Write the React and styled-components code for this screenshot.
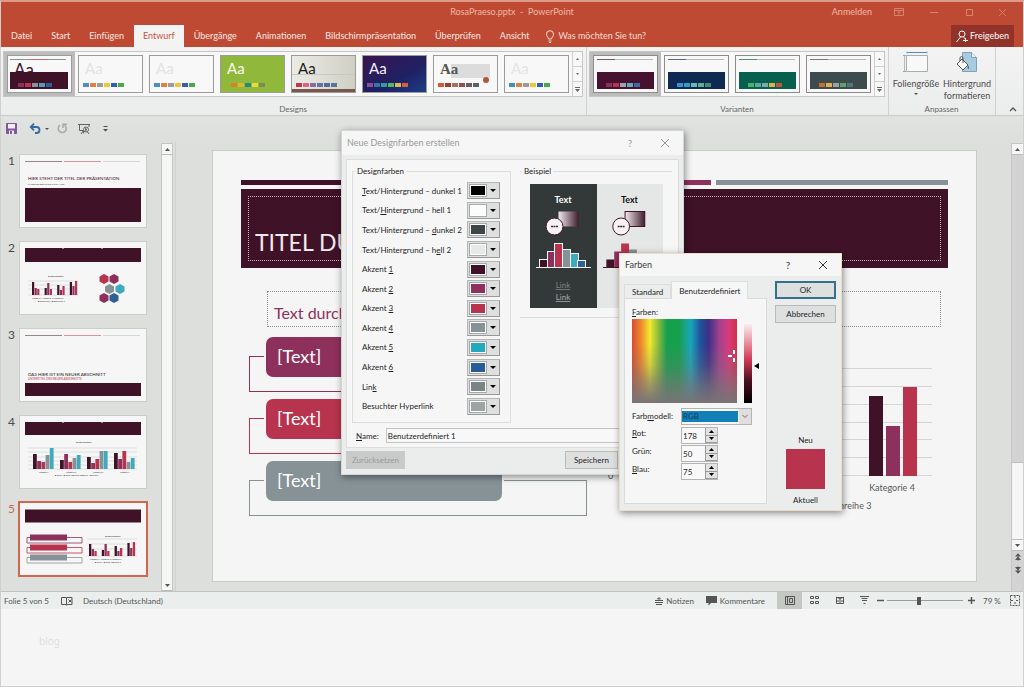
import React from 'react'
import styled, { createGlobalStyle } from 'styled-components'

const wine = '#3f1227'
const purple = '#8e305c'
const red = '#b8334d'
const slate = '#869296'
const teal = '#3fa9bd'
const blue = '#2f5f93'

const GlobalStyle = createGlobalStyle`
*{ box-sizing:border-box; }
body{
margin:0;
background:#f5f5f5;
color:#3c3c3c;
font-family:Lato, "Noto Sans", sans-serif;
font-size:9px;
line-height:12px;
}
button, input, select{
font:inherit;
color:inherit;
margin:0;
padding:0;
border:none;
border-radius:0;
background:none;
}
svg{ display:block; flex-shrink:0; }
`

/* ---------- window ---------- */

const Window = styled.div`
position:relative;
min-height:100vh;
border:1px solid #cfcfcf;
border-top:2px solid #dd9a86;
background:#f5f5f5;
overflow:hidden;
`
const TitleBar = styled.header`
display:grid;
grid-template-columns:1fr auto 1fr;
align-items:center;
height:23px;
padding-bottom:3px;
background:#bf4a33;
color:#f0b8a4;
`
const DocTitle = styled.h1`
grid-column:2;
margin:0;
font-size:9px;
font-weight:400;
`
const TitleTools = styled.div`
display:flex;
align-items:center;
justify-content:flex-end;
padding-right:12px;
`
const SignIn = styled.a`
color:#f0b8a4;
text-decoration:none;
margin-right:22px;
`
const WindowButtons = styled.div`
display:flex;
gap:23px;
color:#d9826c;
button{ width:12px; height:12px; }
`
const TabBar = styled.nav`
display:flex;
gap:1px;
height:22px;
padding:0 9px 0 1px;
background:#bf4a33;
`
const RibbonTab = styled.button`
padding:0 9px;
background:${p => (p.$active ? '#f3f3f3' : 'transparent')};
color:${p => (p.$active ? '#c8553a' : '#fbe9e3')};
`
const TellMe = styled.label`
display:flex;
align-items:center;
gap:3px;
padding-left:6px;
color:#f9dcd2;
input{ width:120px; }
input::placeholder{ color:#f9dcd2; opacity:1; }
`
const ShareButton = styled.button`
display:flex;
align-items:center;
gap:2px;
margin-left:auto;
padding:0 5px;
background:#91332a;
color:#fff;
`

/* ---------- ribbon ---------- */

const Ribbon = styled.section`
display:flex;
height:69px;
background:linear-gradient(#f3f3f3, #ebecec);
border-bottom:1px solid #c9cbc9;
`
const Group = styled.div`
display:flex;
flex-direction:column;
align-items:center;
justify-content:space-between;
padding:4px 3px 0 2px;
border-right:1px solid #d0d2d1;
`
const GroupName = styled.div`
height:12px;
color:#666;
font-size:8px;
`
const Gallery = styled.div`
display:flex;
height:46px;
background:#f8f8f8;
border:1px solid #c6c6c6;
`
const GalleryItem = styled.button`
width:71px;
padding:2px 3px;
background:${p => (p.$active ? '#bcbcbc' : 'transparent')};
`
const GalleryScroll = styled.div`
display:flex;
flex-direction:column;
width:10px;
border-left:1px solid #cfcfcf;
button{
flex:1;
display:flex;
align-items:center;
justify-content:center;
border-bottom:1px solid #cfcfcf;
color:#666;
}
button:last-child{ border-bottom:none; }
`
const BigButtons = styled.div`
display:flex;
gap:1px;
`
const BigButton = styled.button`
display:flex;
flex-direction:column;
align-items:center;
width:50px;
height:50px;
color:#4c4c4c;
svg:first-child{ margin-bottom:3px; }
svg:last-child{ margin-top:3px; }
span{ display:block; }
`
const CollapseButton = styled.button`
align-self:flex-end;
margin-left:auto;
padding:3px 6px;
color:#555;
`

/* ---------- workspace ---------- */

const QuickAccess = styled.div`
display:flex;
align-items:center;
height:25px;
padding-left:5px;
background:linear-gradient(#e1e3e1, #dcdfdb);
color:#4c4c4c;
button{ display:flex; align-items:center; height:16px; }
`
const QuickButton = styled.button`
margin-right:${p => p.$gap || 0}px;
`
const Workspace = styled.main`
display:flex;
padding-top:1px;
background:#dcdfdb;
border-bottom:1px solid #c0c3c1;
`
const SlideList = styled.ol`
list-style:none;
margin:0;
padding:13px 14px 0 6px;
width:160px;
`
const SlideItem = styled.li`
display:flex;
height:87px;
color:${p => (p.$active ? '#cf6650' : '#4b4b4b')};
font-size:12px;
span{ width:13px; padding-left:1px; }
svg{
background:#f6f6f6;
outline:${p => (p.$active ? '2px solid #cf6650' : '1px solid #cbcdcb')};
}
`
const ScrollBar = styled.div`
display:flex;
flex-direction:column;
width:12px;
margin-top:1px;
padding-bottom:${p => (p.$gray ? 14 : 0)}px;
background:${p => (p.$gray ? '#d2d3d2' : '#f6f6f6')};
border:1px solid #c4c6c4;
border-width:1px ${p => (p.$gray ? 0 : 1)}px 0 1px;
`
const ScrollButton = styled.button`
display:flex;
align-items:center;
justify-content:center;
height:${p => (p.$flat ? 13 : 11)}px;
background:${p => (p.$flat ? 'transparent' : '#f6f6f6')};
border-bottom:1px solid ${p => (p.$flat ? 'transparent' : '#bcbebc')};
color:#555;
`
const ScrollTrack = styled.div`
flex:1;
display:flex;
align-items:flex-end;
`
const ScrollThumb = styled.div`
width:100%;
height:78px;
background:#f6f6f6;
border:1px solid #bcbebc;
border-width:1px 0;
`
const Stage = styled.div`
flex:1;
margin-left:2px;
padding:9px 35px 10px 37px;
border-left:1px solid #cfd2cf;
`
const Slide = styled.article`
aspect-ratio:763 / 430;
padding:29px 28px 0;
background:#f5f5f5;
outline:1px solid #c9ccc9;
`
const AccentBars = styled.div`
display:grid;
grid-template-columns:repeat(3, 1fr);
gap:5px;
height:5px;
margin-bottom:4px;
`
const AccentBar = styled.div`
background:${p => p.$color};
`
const TitleBand = styled.div`
height:79px;
padding:7px;
background:${wine};
`
const SlideTitle = styled.h2`
height:65px;
margin:0;
padding:31px 6px 0;
border:1px dotted #c9b4be;
color:#f3e9ee;
font-size:23px;
font-weight:400;
line-height:28px;
white-space:nowrap;
overflow:hidden;
`
const SlideColumns = styled.div`
display:grid;
grid-template-columns:1fr 1fr;
gap:16px;
padding:23px 7px 0 8px;
`
const Placeholder = styled.p`
height:36px;
margin:0 0 10px ${p => (p.$indent ? 18 : 0)}px;
padding:8px 6px;
border:1px dotted #8f8f8f;
color:${purple};
font-size:16px;
line-height:26px;
white-space:nowrap;
`
const SmartArt = styled.div`
display:grid;
gap:7px;
`
const SmartItem = styled.div`
display:grid;
grid-template-columns:17px 236px 1fr;
height:55px;
&::before{
content:"";
grid-area:1 / 1 / 2 / 4;
margin-top:19px;
border:1px solid ${p => p.$color};
}
`
const SmartLabel = styled.div`
grid-area:1 / 2;
height:40px;
padding:0 11px;
border-radius:7px;
background:${p => p.$color};
box-shadow:0 0 0 2px #f5f5f5;
color:#fff;
font-size:18px;
line-height:38px;
`

/* ---------- status bar ---------- */

const StatusBar = styled.footer`
display:flex;
align-items:center;
height:17px;
padding:0 3px;
background:#eaeeed;
color:#555;
font-size:8px;
button{ display:flex; align-items:center; gap:3px; height:17px; }
`
const StatusSpell = styled.button`
margin:0 10px 0 12px;
`
const StatusRight = styled.div`
display:flex;
align-items:center;
margin-left:auto;
`
const StatusButton = styled.button`
margin-right:12px;
`
const ViewButton = styled.button`
width:25px;
justify-content:center;
background:${p => (p.$active ? '#c3c8c5' : 'transparent')};
`
const ZoomSlider = styled.input`
appearance:none;
width:76px;
height:12px;
margin:0 5px 0 3px;
background:linear-gradient(#9a9d9b, #9a9d9b) center / 100% 1px no-repeat;
&::-webkit-slider-thumb{
appearance:none;
width:4px;
height:8px;
background:#555;
}
`
const ZoomValue = styled.span`
width:24px;
margin:0 3px 0 8px;
`
const Watermark = styled.p`
margin:25px 38px;
color:#dfdfdf;
font-family:"Noto Sans", sans-serif;
font-size:10px;
line-height:14px;
`

/* ---------- dialogs ---------- */

const Dialog = styled.section`
position:absolute;
left:${p => p.$left}px;
top:${p => p.$top}px;
width:${p => p.$width}px;
background:#ebecec;
border:${p => p.$border};
box-shadow:1px 2px 7px rgba(0,0,0,.45);
color:#1e1e1e;
font-size:8px;
`
const DialogHead = styled.div`
display:flex;
align-items:center;
height:${p => p.$height}px;
padding:0 13px 0 5px;
background:#f6f6f6;
color:${p => p.$color};
h2{ margin:0 auto 0 0; font-size:9px; font-weight:400; }
button{ display:flex; align-items:center; justify-content:center; width:10px; height:16px; margin-left:25px; font-size:10px; }
`
const DialogPage = styled.div`
margin:4px 4px 0;
border:1px solid #dcdddd;
background:#f6f6f6;
`
const PageColumns = styled.div`
display:grid;
grid-template-columns:159px 152px;
gap:9px;
align-items:start;
padding:5px;
`
const Fieldset = styled.fieldset`
min-width:0;
margin:0;
padding:0 2px;
border:1px solid #dcdddd;
border-width:1px ${p => (p.$open ? 0 : 1)}px 1px ${p => (p.$open ? 0 : 1)}px;
legend{ padding:0 2px; font-size:8px; }
`
const ColorRows = styled.div`
display:grid;
grid-template-rows:repeat(12, 1fr);
align-items:center;
height:235px;
margin:4px 8px 6px 7px;
`
const ColorRow = styled.div`
display:flex;
align-items:center;
justify-content:space-between;
white-space:nowrap;
u{ text-underline-offset:1px; }
`
const ColorPicker = styled.span`
display:grid;
width:33px;
height:17px;
background:#dedfdf;
border:1px solid #b4b6b5;
border-right-color:#999;
border-bottom-color:#999;
select{ grid-area:1 / 1; appearance:none; width:100%; }
svg{ grid-area:1 / 1; place-self:center end; margin-right:3px; pointer-events:none; }
`
const Swatch = styled.span`
grid-area:1 / 1;
align-self:center;
width:16px;
height:11px;
margin-left:2px;
background:${p => p.$color};
border:1px solid #fff;
outline:1px solid #a5a9a9;
pointer-events:none;
`
const Preview = styled.div`
display:grid;
grid-template-columns:67px 66px;
margin:7px 7px 9px 8px;
`
const NameRow = styled.div`
display:flex;
align-items:center;
gap:7px;
padding:0 5px 4px 9px;
input{
flex:1;
height:15px;
padding-left:1px;
background:#f8f8f8;
border:1px solid #c4c4c4;
border-right-color:#e2e2e2;
}
`
const DialogFoot = styled.div`
display:flex;
gap:5px;
height:26px;
padding:3px 7px 3px 4px;
`
const PushButton = styled.button`
flex:none;
width:${p => p.$width}px;
height:18px;
background:#dee0df;
border:${p => (p.$main ? '2px solid #35708f' : '1px solid #b9bbba')};
margin-right:${p => (p.$push ? 'auto' : 0)};
&:disabled{ background:#c8cac9; border-color:#c8cac9; color:#989a99; }
`
const FarbenBody = styled.div`
display:flex;
justify-content:space-between;
padding:5px 5px 4px 4px;
`
const Tabs = styled.div`
display:flex;
align-items:flex-end;
height:17px;
`
const Tab = styled.button`
height:${p => (p.$active ? 18 : 14)}px;
margin-bottom:${p => (p.$active ? -1 : 0)}px;
padding:0 7px;
background:${p => (p.$active ? '#f6f6f6' : 'transparent')};
border:1px solid #dcdddd;
border-bottom:none;
`
const TabPage = styled.div`
width:143px;
height:206px;
margin-bottom:2px;
padding:7px;
background:#f6f6f6;
border:1px solid #d9dada;
`
const Pickers = styled.div`
display:flex;
gap:7px;
margin:1px 0 5px;
`
const Spectrum = styled.div`
position:relative;
width:106px;
height:84px;
background:
linear-gradient(rgba(120,116,118,0) 30%, rgba(120,116,118,.25) 55%, rgba(120,116,118,.7) 80%, rgba(120,116,118,1)),
linear-gradient(90deg, #d84b34, #ef8b2c 9%, #f3ea2e 17%, #8dbb3c 25%, #16a04e 33%, #16a04e 45%, #1aa6bd 56%, #20549c 65%, #3c2f87 73%, #a0428d 83%, #d83a7c 92%, #cf2f4b);
svg{ position:absolute; left:96px; top:30px; }
`
const Luminance = styled.div`
display:flex;
align-items:center;
gap:2px;
height:84px;
&::before{
content:"";
width:8px;
height:79px;
margin-top:5px;
background:linear-gradient(#f8eef0, #e78b9a 25%, #cf3a58 45%, #4a1020 72%, #000);
}
svg{ margin-top:10px; }
`
const Fields = styled.div`
display:grid;
grid-template-columns:42px 1fr;
column-gap:7px;
row-gap:1px;
label:first-child{ line-height:17px; }
`
const ModelSelect = styled.span`
display:grid;
width:71px;
height:17px;
margin-bottom:1px;
background:#f8f8f8;
border:1px solid #b4b4b4;
select{
grid-area:1 / 1;
appearance:none;
padding-left:1px;
margin:2px 13px 2px 0;
background:#1180b8;
color:#123c5a;
line-height:11px;
}
svg{
grid-area:1 / 1;
justify-self:end;
pointer-events:none;
}
`
const Spinner = styled.span`
display:flex;
width:37px;
height:17px;
background:#f8f8f8;
border:1px solid #b4b4b4;
input{ width:23px; padding-left:1px; }
div{ display:flex; flex-direction:column; width:12px; }
button{
flex:1;
display:flex;
align-items:center;
justify-content:center;
background:#e2e2e2;
border:1px solid #9a9a9a;
border-width:0 0 1px 1px;
}
`
const SideColumn = styled.div`
display:flex;
flex-direction:column;
align-items:center;
`
const ButtonStack = styled.div`
display:grid;
gap:6px;
margin:0 0 auto;
`
const NewColor = styled.div`
width:39px;
height:40px;
margin:3px 0 5px;
background:${red};
`

/* ---------- small drawings ---------- */

const Arrow = ({ up, w = 6, h = 3, color = 'currentColor' }) => (
    <svg width={w} height={h} viewBox="0 0 6 3" preserveAspectRatio="none">
        <path d={up ? 'M0 3L3 0L6 3z' : 'M0 0L3 3L6 0z'} fill={color} />
    </svg>
)
const DoubleArrow = ({ up }) => (
    <svg width="6" height="8" viewBox="0 0 7 9" fill="currentColor">
        <path d={up ? 'M0 4L3.500 0L7 4zM0 8L3.500 4L7 8z' : 'M0 1L3.500 5L7 1zM0 5L3.500 9L7 5z'} />
        <path d={up ? 'M3 4h1v5H3z' : 'M3 0h1v5H3z'} />
    </svg>
)
const Cross = ({ size = 8 }) => (
    <svg width={size} height={size} viewBox="0 0 8 8" stroke="currentColor" fill="none">
        <path d="M0 0L8 8M8 0L0 8" />
    </svg>
)
const MoreArrow = () => (
    <svg width="5" height="5" viewBox="0 0 5 5" fill="currentColor"><path d="M0 0h5v1H0zM0 2h5L2.500 5z" /></svg>
)

const Chips = ({ x, y = 28, colors }) => colors.map((c, i) => (
    <rect key={i} x={x + i * 7} y={y} width="6" height="4" fill={c} />
))

const office = ['#4a90c4', '#e08040', '#a09a96', '#e8c93a', '#2f62a8', '#4ba84b']

const themes = [
    { name: 'RosaPraeso', wine: true, active: true, chips: [purple, red, slate, '#4f9fbd', blue], chipX: 11 },
    { name: 'Office', aa: '#e2e3e3', chips: office, chipX: 5 },
    { name: 'Office 2', aa: '#e2e3e3', chips: office, chipX: 5 },
    { name: 'Facette', bg: '#90b83a', aa: '#f7f9ee', chips: ['#d9822b', '#e0b62e', '#25897e', '#e6dc3e', '#7f8d55'], chipX: 11 },
    { name: 'Galerie', bg: 'url(#paper)', aa: '#1d1d1d', wood: true, chips: ['#c0364c', '#d7638a', '#8b6aa0', '#6273a8', '#566a9a', '#57759d'], chipX: 5 },
    { name: 'Ion', bg: 'url(#ion)', aa: '#f3eef7', chips: ['#8a4ea0', '#2e77a6', '#2f9c9c', '#57b560', '#dcb553', '#d4603c'], chipX: 5 },
    { name: 'Holzart', aa: '#555', pattern: true, serif: true, chips: ['#d2593a', '#9c3b33', '#a0735c', '#8a5450', '#6a5a66', '#5c6068'], chipX: 5 },
    { name: 'Rückblick', aa: '#e4e5e5', chips: ['#3e93b0', '#e08040', '#a09a96', '#e8c93a', '#2f62a8', '#4ba84b'], chipX: 5 },
]

const variants = [
    { name: 'Variante 1', active: true, band: '#471230', chips: [purple, red, '#9aa5a8', '#5da9c4', '#3b6e9f'] },
    { name: 'Variante 2', band: '#0f2a52', chips: ['#3a93d0', '#2aa0c8', '#6cb8b8', '#5eb08e', '#3f8e74'] },
    { name: 'Variante 3', band: '#07604e', chips: ['#4fb06a', '#5fa5a0', '#7fa8b0', '#dfae4e', '#c0553a'] },
    { name: 'Variante 4', band: '#3d4b4c', chips: ['#c5702f', '#e0b050', '#97a5a5', '#5fa070', '#51757c'] },
]

const ThemeThumb = ({ theme }) => (
    <svg width="65" height="38" viewBox="0 0 65 38">
        <defs>
            <linearGradient id="ion" x1="0" y1="0" x2="1" y2="1">
                <stop offset="0" stopColor="#3a1550" />
                <stop offset=".6" stopColor="#1f2063" />
                <stop offset="1" stopColor="#1c3f86" />
            </linearGradient>
            <linearGradient id="paper">
                <stop offset="0" stopColor="#ecece6" />
                <stop offset="1" stopColor="#cfcfc4" />
            </linearGradient>
        </defs>
        <rect x=".5" y=".5" width="64" height="37" fill={theme.bg || '#f8f8f8'} stroke="#9b9b9b" />
        {theme.wood && <path d="M1 19h63v1H1z" fill="#c9c8be" />}
        {theme.wood && <path d="M1 34h63v3H1z" fill="#76584c" />}
        {theme.pattern && <path d="M18 9h39v14H18z" fill="#dcdcdc" />}
        {theme.pattern && <circle cx="53" cy="25" r="3" fill="#b5543c" />}
        {theme.wine && <path d="M3 4.500h56" stroke={slate} />}
        {theme.wine && <path d="M22 4.500h18" stroke="#c06a80" />}
        <text x="7" y={theme.wine ? 21 : 19} fontSize={theme.wine ? 17 : 15} fill={theme.aa || wine}
            fontWeight={theme.serif ? 700 : 400} fontFamily={theme.serif ? 'Liberation Serif, serif' : 'Lato, sans-serif'}>Aa</text>
        {theme.wine && <path d="M3 17h58v17H3z" fill={wine} />}
        <Chips x={theme.chipX} colors={theme.chips} />
    </svg>
)

const VariantThumb = ({ variant }) => (
    <svg width="65" height="38" viewBox="0 0 65 38">
        <rect x=".5" y=".5" width="64" height="37" fill="#f8f8f8" stroke="#8b8b8b" />
        <path d="M4 4.500h18" stroke={variant.band} opacity=".7" />
        <path d="M22 4.500h38" stroke="#b4baba" />
        <path d="M4 17h57v17H4z" fill={variant.band} />
        <Chips x={13} y={28} colors={variant.chips} />
    </svg>
)

/* bars of the miniature charts: x offset of every group, then the heights */
const MiniBars = ({ x, base, step, w, groups, colors }) => groups.map((g, i) => g.map((h, j) => (
    <rect key={`${i}-${j}`} x={x + i * step + j * w} y={base - h} width={w - 0.4} height={h} fill={colors[j]} />
)))

const MiniTop = () => (
    <g>
        <path d="M5 6.500h37" stroke={wine} opacity=".5" />
        <path d="M44 6.500h37" stroke={red} opacity=".5" />
        <path d="M83 6.500h37" stroke={slate} opacity=".3" />
    </g>
)
const MiniText = ({ x, y, size = 2, children, ...rest }) => (
    <text x={x} y={y} fontSize={size} fill="#333" {...rest}>{children}</text>
)
const hexagons = [[84, 37, red], [94, 37, purple], [89.5, 47, slate], [100, 47, teal], [84, 56, purple], [94, 56, blue]]

const slides = [
    <g key="1">
        <MiniTop />
        <MiniText x="8" y="25" size="4.500" fill={wine}>HIER STEHT DER TITEL DER PRÄSENTATION</MiniText>
        <MiniText x="8" y="30">UNTERTITEL DER PRÄSENTATION HIER</MiniText>
        <path d="M5 33h116v34H5z" fill={wine} />
    </g>,
    <g key="2">
        <path d="M5 6h116v14H5z" fill={wine} />
        <path d="M42 6h2v.5h-2zM81 6h2v.5h-2z" fill="#f6f6f6" />
        <path d="M8 39h50M8 43h50M8 47h50M8 53h50" stroke="#c4c4c4" strokeWidth=".5" />
        <MiniText x="28" y="35" size="2.500">Diagrammtitel</MiniText>
        <MiniBars x={12} base={53} step={12.6} w={2.6} colors={[wine, purple, red]} groups={[[13, 7, 6], [7, 12, 6], [10, 5, 9], [13, 9, 14]]} />
        <MiniText x="12" y="56.500">Kategorie 1  Kategorie 2  Kategorie 3</MiniText>
        <MiniText x="18" y="59.500">■ Datenreihe 1 ■ Datenreihe 2</MiniText>
        {hexagons.map(([x, y, c]) => (
            <path key={`${x}${y}`} d={`M${x - 4.5} ${y - 2.5}l4.500 -2.500l4.500 2.500v5l-4.500 2.500l-4.500 -2.500z`} fill={c} />
        ))}
    </g>,
    <g key="3">
        <MiniTop />
        <MiniText x="8" y="47" size="4.500" fill="#222">DAS HIER IST EIN NEUER ABSCHNITT</MiniText>
        <MiniText x="8" y="51" size="3" fill={red}>UNTERTITEL DES NEUEN ABSCHNITTS</MiniText>
        <path d="M5 54h116v13H5z" fill={wine} />
    </g>,
    <g key="4">
        <path d="M5 6h116v13H5z" fill={wine} />
        <path d="M42 6h2v.5h-2zM81 6h2v.5h-2z" fill="#f6f6f6" />
        <MiniText x="56" y="27" size="2.500">Diagrammtitel</MiniText>
        <path d="M8 32h109M8 36h109M8 41h109M8 45h109M8 49h109M8 53h109" stroke="#c4c4c4" strokeWidth=".5" />
        <MiniBars x={13} base={53} step={27} w={4.2} colors={[wine, purple, red, slate, teal]} groups={[[15, 8, 7, 14, 21], [9, 15, 7, 11, 14], [12, 6, 10, 18, 18], [16, 10, 18, 7, 11]]} />
        <MiniText x="19" y="56.500">Kategorie 1</MiniText>
        <MiniText x="46" y="56.500">Kategorie 2</MiniText>
        <MiniText x="73" y="56.500">Kategorie 3</MiniText>
        <MiniText x="100" y="56.500">Kategorie 4</MiniText>
        <MiniText x="35" y="59.500">■ Reihe 1   ■ Reihe 2   ■ Reihe 3   ■ Reihe 4   ■ Reihe 5</MiniText>
    </g>,
    <g key="5">
        <path d="M5 6.500h116v13H5z" fill={wine} />
        {[purple, red, slate].map((c, i) => (
            <g key={c}>
                <path d={`M7 ${34.500 + i * 10}h55v5.500h-55z`} fill="none" stroke={c} strokeWidth=".8" />
                <path d={`M10 ${31.500 + i * 10}h37v6h-37z`} fill={c} />
            </g>
        ))}
        <MiniText x="85" y="34" size="2.500">Diagrammtitel</MiniText>
        <path d="M67 36h50M67 41h50M67 46h50M67 53h50" stroke="#c4c4c4" strokeWidth=".5" />
        <MiniBars x={69} base={53} step={12.8} w={2.7} colors={[wine, purple, red]} groups={[[12, 7, 5], [6, 12, 5], [10, 5, 8], [13, 8, 14]]} />
        <MiniText x="70" y="56.500">Kategorie 1  Kategorie 2  Kategorie 3</MiniText>
        <MiniText x="75" y="59.500">■ Reihe 1   ■ Reihe 2   ■ Reihe 3</MiniText>
    </g>,
]

const chartData = [[4.3, 2.4, 2], [2.5, 4.4, 2], [3.5, 1.8, 3], [4.5, 2.8, 5]]

const Chart = () => (
    <svg width="100%" viewBox="0 0 338 176" fill="#595959" fontSize="9">
        <text x="173" y="22" textAnchor="middle" fontSize="14">Diagrammtitel</text>
        {[0, 1, 2, 3, 4, 5, 6].map(n => (
            <g key={n}>
                <path d={`M17 ${Math.round(139 - n * 17.8) - 0.5}h312`} stroke="#d3d6d3" />
                <text x="5" y={142 - n * 18}>{n}</text>
            </g>
        ))}
        {chartData.map((group, i) => (
            <g key={i}>
                {group.map((v, j) => (
                    <rect key={j} x={32 + i * 78 + j * 17} y={Math.round(139 - v * 17.8)} width="14" height={Math.round(v * 17.8)} fill={[wine, purple, red][j]} />
                ))}
                <text x={55 + i * 78} y="154" textAnchor="middle">Kategorie {i + 1}</text>
            </g>
        ))}
        {[1, 2, 3].map((n, i) => (
            <text key={n} x={81 + i * 68} y="172">Datenreihe {n}</text>
        ))}
    </svg>
)

const previewBars = [[0, 8, wine], [8, 16, purple], [15, 24, red], [23, 18, slate], [31, 14, teal], [38, 7, blue]]

const PreviewPane = ({ dark }) => {
    const line = dark ? '#f6f6f6' : '#3f1227'
    const id = dark ? 'shadeDark' : 'shadeLight'
    return (
        <svg width="100%" height="124" viewBox="0 0 67 124" preserveAspectRatio="none">
            <defs>
                <linearGradient id={id}>
                    <stop offset="0" stopColor="#f3e8ee" />
                    <stop offset="1" stopColor="#3f1f2d" />
                </linearGradient>
            </defs>
            <rect width="67" height="124" fill={dark ? '#333939' : '#e5e6e6'} />
            <text x="33" y="19" textAnchor="middle" fontSize="9" fontWeight="700" fill={dark ? '#fff' : '#111'}>Text</text>
            <rect x="28.500" y="27.500" width="20" height="15" fill={`url(#${id})`} stroke={dark ? 'none' : wine} />
            <circle cx="24.500" cy="42.500" r="8.500" fill="#f8f2f5" stroke={wine} />
            <path d="M21 42.500h7" stroke="#333" strokeWidth="1.500" strokeDasharray="2 .5" />
            {previewBars.map(([x, h, c]) => (
                <rect key={x} x={x + 9.5} y={83.5 - h} width="8" height={h} fill={c} stroke={dark ? line : 'none'} strokeWidth="1" />
            ))}
            <path d="M6 83.500h55" stroke={line} />
            <text x="33" y="104" textAnchor="middle" fontSize="8" fill={dark ? '#7d8484' : '#777'} textDecoration="underline">Link</text>
            <text x="33" y="116" textAnchor="middle" fontSize="8" fill={dark ? '#a6abab' : '#999'} textDecoration="underline">Link</text>
        </svg>
    )
}

const colorRows = [
    { id: 'dk1', label: <span><u>T</u>ext/Hintergrund – dunkel 1</span>, color: '#000' },
    { id: 'lt1', label: <span>Text/<u>H</u>intergrund – hell 1</span>, color: '#fbfbfb' },
    { id: 'dk2', label: <span>Text/Hintergrund – <u>d</u>unkel 2</span>, color: '#3c4646' },
    { id: 'lt2', label: <span>Text/Hintergrund – h<u>e</u>ll 2</span>, color: '#e7e8e8' },
    { id: 'ac1', label: <span>Akzent <u>1</u></span>, color: wine },
    { id: 'ac2', label: <span>Akzent <u>2</u></span>, color: purple },
    { id: 'ac3', label: <span>Akzent <u>3</u></span>, color: red },
    { id: 'ac4', label: <span>Akzent <u>4</u></span>, color: slate },
    { id: 'ac5', label: <span>Akzent <u>5</u></span>, color: '#22a9bd' },
    { id: 'ac6', label: <span>Akzent <u>6</u></span>, color: '#265c98' },
    { id: 'link', label: <span>Lin<u>k</u></span>, color: '#7c8384' },
    { id: 'seen', label: <span>Besuchter Hyperlink</span>, color: '#9ea3a4' },
]

const channels = [
    { id: 'rot', label: <span><u>R</u>ot:</span>, value: 178 },
    { id: 'gruen', label: <span>Grün:</span>, value: 50 },
    { id: 'blau', label: <span><u>B</u>lau:</span>, value: 75 },
]

function GalleryArrows() {
    return (
        <GalleryScroll>
            <button aria-label="Nach oben"><Arrow up w={3} h={2} /></button>
            <button aria-label="Nach unten"><Arrow w={3} h={2} /></button>
            <button aria-label="Weitere"><MoreArrow /></button>
        </GalleryScroll>
    )
}

function RibbonArea() {
    return (
        <Ribbon>
            <Group>
                <Gallery>
                    {themes.map(t => (
                        <GalleryItem key={t.name} $active={t.active} aria-label={t.name}><ThemeThumb theme={t} /></GalleryItem>
                    ))}
                    <GalleryArrows />
                </Gallery>
                <GroupName>Designs</GroupName>
            </Group>
            <Group>
                <Gallery>
                    {variants.map(v => (
                        <GalleryItem key={v.name} $active={v.active} aria-label={v.name}><VariantThumb variant={v} /></GalleryItem>
                    ))}
                    <GalleryArrows />
                </Gallery>
                <GroupName>Varianten</GroupName>
            </Group>
            <Group>
                <BigButtons>
                    <BigButton>
                        <svg width="26" height="24" viewBox="0 0 26 24" fill="none">
                            <path d="M3.500 4.500h21v16h-21z" fill="#f8f8f8" stroke="#a9adad" />
                            <path d="M4 1.500h20" stroke="#4a8fbf" />
                            <path d="M1.500 4v16" stroke="#b5b9b9" />
                            <path d="M4 .5v2M24 .5v2M0 4.500h3M0 20.500h3" stroke="#8aa9bd" />
                        </svg>
                        <span>Foliengröße</span>
                        <Arrow w={4} h={2} />
                    </BigButton>
                    <BigButton>
                        <svg width="24" height="24" viewBox="0 0 24 24" fill="none">
                            <path d="M7.500 1.500h9l5 5v14h-14z" fill="#a9cbe0" stroke="#7fa0b5" />
                            <path d="M16.500 1.500v5h5" fill="#eef4f8" stroke="#7fa0b5" />
                            <path d="M7 8l6 6l-5 5l-6-6z" fill="#f8f8f8" stroke="#555" />
                            <path d="M8 12V6.500q-1.500-2-3 0V10" stroke="#555" />
                            <path d="M13 14q2 3 .5 4q-1.500-1-.5-4z" fill="#3c6f93" />
                        </svg>
                        <span>Hintergrund</span>
                        <span>formatieren</span>
                    </BigButton>
                </BigButtons>
                <GroupName>Anpassen</GroupName>
            </Group>
            <CollapseButton aria-label="Menüband reduzieren">
                <svg width="8" height="6" viewBox="0 0 8 6" fill="none" stroke="currentColor" strokeWidth="1.300"><path d="M1 5L4 2L7 5" /></svg>
            </CollapseButton>
        </Ribbon>
    )
}

function QuickAccessBar() {
    return (
        <QuickAccess>
            <QuickButton $gap={12} aria-label="Speichern">
                <svg width="11" height="11" viewBox="0 0 11 11" fill="none" stroke="#80579b">
                    <path d="M.5 .5h10v10h-10z" fill="#80579b" />
                    <path d="M2 1h7v4.500H2z" fill="#f3eef6" stroke="none" />
                    <path d="M3 7.500h5V11H3z" fill="#f3eef6" stroke="none" />
                    <path d="M4 8h2v3H4z" fill="#80579b" stroke="none" />
                </svg>
            </QuickButton>
            <QuickButton $gap={4} aria-label="Rückgängig">
                <svg width="12" height="11" viewBox="0 0 12 11" fill="none" stroke="#376a9c" strokeWidth="1.800">
                    <path d="M2 4h5.500a3 3 0 0 1 0 6H6" /><path d="M5 .7L1.700 4L5 7.300" />
                </svg>
            </QuickButton>
            <QuickButton $gap={8} aria-label="Rückgängig-Liste"><Arrow w={4} h={2} /></QuickButton>
            <QuickButton $gap={10} aria-label="Wiederholen">
                <svg width="11" height="11" viewBox="0 0 11 11" fill="none" stroke="#a6a9a7" strokeWidth="1.500">
                    <path d="M7.500 2.200a4 4 0 1 1-4.500 0" /><path d="M6 5V1.200H10" />
                </svg>
            </QuickButton>
            <QuickButton $gap={13} aria-label="Von Beginn an">
                <svg width="12" height="12" viewBox="0 0 12 12" fill="none" stroke="#5f6361">
                    <path d="M0 1.500h12M1.500 2v5.500h4M11 2v2M5.500 7.500L3 11M5.500 7.500v3" />
                    <circle cx="8" cy="6.500" r="2.500" /><path d="M7.500 5.500l1.500 1l-1.500 1zM9.500 9l1.500 2" />
                </svg>
            </QuickButton>
            <QuickButton aria-label="Symbolleiste anpassen">
                <svg width="5" height="6" viewBox="0 0 5 6" fill="currentColor"><path d="M.5 0h4v1h-4zM0 3h5L2.500 5.500z" /></svg>
            </QuickButton>
        </QuickAccess>
    )
}

function ThemeColorsDialog() {
    return (
        <Dialog $left={340} $top={128} $width={343} $border="1px solid #d4d5d5" aria-label="Neue Designfarben erstellen">
            <DialogHead $height={24} $color="#9a9a9a">
                <h2>Neue Designfarben erstellen</h2>
                <button aria-label="Hilfe">?</button>
                <button aria-label="Schließen"><Cross /></button>
            </DialogHead>
            <DialogPage>
                <PageColumns>
                    <Fieldset>
                        <legend>Designfarben</legend>
                        <ColorRows>
                            {colorRows.map(row => (
                                <ColorRow key={row.id}>
                                    <label htmlFor={row.id}>{row.label}</label>
                                    <ColorPicker>
                                        <select id={row.id}><option value={row.id} aria-label={row.id} /></select>
                                        <Swatch $color={row.color} />
                                        <Arrow w={6} h={3} color="#000" />
                                    </ColorPicker>
                                </ColorRow>
                            ))}
                        </ColorRows>
                    </Fieldset>
                    <Fieldset $open>
                        <legend>Beispiel</legend>
                        <Preview>
                            <PreviewPane dark />
                            <PreviewPane />
                        </Preview>
                    </Fieldset>
                </PageColumns>
                <NameRow>
                    <label htmlFor="schemeName"><u>N</u>ame:</label>
                    <input id="schemeName" defaultValue="Benutzerdefiniert 1" />
                </NameRow>
            </DialogPage>
            <DialogFoot>
                <PushButton $width={59} $push disabled>Zurücksetzen</PushButton>
                <PushButton $width={53}>Speichern</PushButton>
                <PushButton $width={53}>Abbrechen</PushButton>
            </DialogFoot>
        </Dialog>
    )
}

function ColorsDialog() {
    return (
        <Dialog $left={618} $top={251} $width={223} $border="1px solid #ecdcc3" aria-label="Farben">
            <DialogHead $height={22} $color="#3c3c3c">
                <h2>Farben</h2>
                <button aria-label="Hilfe">?</button>
                <button aria-label="Schließen"><Cross /></button>
            </DialogHead>
            <FarbenBody>
                <div>
                    <Tabs role="tablist">
                        <Tab role="tab">Standard</Tab>
                        <Tab role="tab" $active>Benutzerdefiniert</Tab>
                    </Tabs>
                    <TabPage>
                        <div><u>F</u>arben:</div>
                        <Pickers>
                            <Spectrum>
                                <svg width="10" height="14" viewBox="0 0 10 14" stroke="#fff" strokeWidth="2">
                                    <path d="M0 7h4M6 1v4M6 9v4" />
                                </svg>
                            </Spectrum>
                            <Luminance>
                                <svg width="5" height="6" viewBox="0 0 5 6"><path d="M5 0v6L0 3z" /></svg>
                            </Luminance>
                        </Pickers>
                        <Fields>
                            <label htmlFor="model">Farb<u>m</u>odell:</label>
                            <ModelSelect>
                                <select id="model"><option>RGB</option></select>
                                <svg width="12" height="15" viewBox="0 0 12 15" fill="none">
                                    <path d="M0 0h12v15H0z" fill="#dfdfdf" />
                                    <path d="M3.500 6L6 8.500L8.500 6" stroke="#a05a50" />
                                </svg>
                            </ModelSelect>
                            {channels.map(c => (
                                <React.Fragment key={c.id}>
                                    <label htmlFor={c.id}>{c.label}</label>
                                    <Spinner>
                                        <input id={c.id} defaultValue={c.value} />
                                        <div>
                                            <button aria-label="Mehr"><Arrow up w={5} h={3} color="#000" /></button>
                                            <button aria-label="Weniger"><Arrow w={5} h={3} color="#000" /></button>
                                        </div>
                                    </Spinner>
                                </React.Fragment>
                            ))}
                        </Fields>
                    </TabPage>
                </div>
                <SideColumn>
                    <ButtonStack>
                        <PushButton $width={61} $main>OK</PushButton>
                        <PushButton $width={61}>Abbrechen</PushButton>
                    </ButtonStack>
                    <div>Neu</div>
                    <NewColor />
                    <div>Aktuell</div>
                </SideColumn>
            </FarbenBody>
        </Dialog>
    )
}

function App() {
    return (
        <Window>
            <GlobalStyle />
            <TitleBar>
                <DocTitle>RosaPraeso.pptx &nbsp;- &nbsp;PowerPoint</DocTitle>
                <TitleTools>
                    <SignIn href="#anmelden">Anmelden</SignIn>
                    <WindowButtons>
                        <button aria-label="Menüband-Anzeigeoptionen">
                            <svg width="11" height="12" viewBox="0 0 11 12" fill="none" stroke="currentColor"><path d="M.5 2.500h9v7h-9zM1 4.500h8M5 8.500v-3M3.500 7L5 5.500L6.500 7" /></svg>
                        </button>
                        <button aria-label="Minimieren">
                            <svg width="11" height="12" viewBox="0 0 11 12" stroke="currentColor"><path d="M1 6.500h8" /></svg>
                        </button>
                        <button aria-label="Maximieren">
                            <svg width="11" height="12" viewBox="0 0 11 12" fill="none" stroke="currentColor"><path d="M2.500 3.500h6v6h-6z" /></svg>
                        </button>
                        <button aria-label="Fenster schließen"><Cross size={7} /></button>
                    </WindowButtons>
                </TitleTools>
            </TitleBar>
            <TabBar>
                <RibbonTab>Datei</RibbonTab>
                <RibbonTab>Start</RibbonTab>
                <RibbonTab>Einfügen</RibbonTab>
                <RibbonTab $active>Entwurf</RibbonTab>
                <RibbonTab>Übergänge</RibbonTab>
                <RibbonTab>Animationen</RibbonTab>
                <RibbonTab>Bildschirmpräsentation</RibbonTab>
                <RibbonTab>Überprüfen</RibbonTab>
                <RibbonTab>Ansicht</RibbonTab>
                <TellMe>
                    <svg width="10" height="13" viewBox="0 0 10 13" fill="none" stroke="currentColor">
                        <path d="M3.500 9C3.500 7.500 1.500 6.500 1.500 4.200a3.500 3.500 0 0 1 7 0C8.500 6.500 6.500 7.500 6.500 9zM3.500 11h3M4 12.500h2" />
                    </svg>
                    <input placeholder="Was möchten Sie tun?" />
                </TellMe>
                <ShareButton>
                    <svg width="12" height="13" viewBox="0 0 12 13" fill="none" stroke="currentColor">
                        <circle cx="6" cy="4" r="3" /><path d="M4.500 7L.5 12M7.500 7l2 2M7 10.500h5M9.500 8v4" />
                    </svg>
                    Freigeben
                </ShareButton>
            </TabBar>
            <RibbonArea />
            <QuickAccessBar />
            <Workspace>
                <SlideList>
                    {slides.map((slide, i) => (
                        <SlideItem key={i} $active={i === 4}>
                            <span>{i + 1}</span>
                            <svg width="126" height="72" viewBox="0 0 126 72">{slide}</svg>
                        </SlideItem>
                    ))}
                </SlideList>
                <ScrollBar>
                    <ScrollButton aria-label="Nach oben"><Arrow up w={5} h={3} /></ScrollButton>
                    <ScrollTrack />
                    <ScrollButton aria-label="Nach unten"><Arrow w={5} h={3} /></ScrollButton>
                </ScrollBar>
                <Stage>
                    <Slide>
                        <AccentBars>
                            <AccentBar $color={wine} />
                            <AccentBar $color={purple} />
                            <AccentBar $color={slate} />
                        </AccentBars>
                        <TitleBand>
                            <SlideTitle>TITEL DURCH KLICKEN HINZUFÜGEN</SlideTitle>
                        </TitleBand>
                        <SlideColumns>
                            <div>
                                <Placeholder $indent>Text durch Klicken hinzufügen</Placeholder>
                                <SmartArt>
                                    {[purple, red, slate].map(c => (
                                        <SmartItem key={c} $color={c}><SmartLabel $color={c}>[Text]</SmartLabel></SmartItem>
                                    ))}
                                </SmartArt>
                            </div>
                            <div>
                                <Placeholder>Text durch Klicken</Placeholder>
                                <Chart />
                            </div>
                        </SlideColumns>
                    </Slide>
                </Stage>
                <ScrollBar $gray>
                    <ScrollButton aria-label="Nach oben"><Arrow up w={5} h={3} /></ScrollButton>
                    <ScrollTrack><ScrollThumb /></ScrollTrack>
                    <ScrollButton aria-label="Nach unten"><Arrow w={5} h={3} /></ScrollButton>
                    <ScrollButton $flat aria-label="Vorherige Folie"><DoubleArrow up /></ScrollButton>
                    <ScrollButton $flat aria-label="Nächste Folie"><DoubleArrow /></ScrollButton>
                </ScrollBar>
            </Workspace>
            <StatusBar>
                <span>Folie 5 von 5</span>
                <StatusSpell aria-label="Rechtschreibung">
                    <svg width="12" height="10" viewBox="0 0 12 10" fill="none" stroke="currentColor">
                        <path d="M5.500 1.500h-5v7h5v1M5.500 1.500v7M6 1.500h5v7H6M7.500 3.500l3 3M10.500 3.500l-3 3" />
                    </svg>
                </StatusSpell>
                <span>Deutsch (Deutschland)</span>
                <StatusRight>
                    <StatusButton>
                        <svg width="8" height="8" viewBox="0 0 8 8" fill="none" stroke="currentColor"><path d="M0 3.500h8M0 5.500h8M1 7.500h6M4 .5L2.500 2h3z" /></svg>
                        Notizen
                    </StatusButton>
                    <StatusButton>
                        <svg width="11" height="10" viewBox="0 0 11 10" fill="currentColor"><path d="M0 0h11v7H5L2.500 9.500V7H0z" /></svg>
                        Kommentare
                    </StatusButton>
                    <ViewButton $active aria-label="Normalansicht">
                        <svg width="10" height="9" viewBox="0 0 10 9" fill="none" stroke="currentColor"><path d="M.5 .5h9v8h-9zM2.500 1v7M4.500 2.500h3v4h-3z" /></svg>
                    </ViewButton>
                    <ViewButton aria-label="Foliensortierung">
                        <svg width="9" height="9" viewBox="0 0 9 9" fill="none" stroke="currentColor"><path d="M.5 .5h3v2h-3zM5.500 .5h3v2h-3zM.5 5.500h3v2h-3zM5.500 5.500h3v2h-3z" /></svg>
                    </ViewButton>
                    <ViewButton aria-label="Leseansicht">
                        <svg width="8" height="9" viewBox="0 0 8 9" fill="none" stroke="currentColor"><path d="M.5 1v6.500h7V1L4 3zM4 3v4M2 4v2M6 4v2M2 1.500h4" /></svg>
                    </ViewButton>
                    <ViewButton aria-label="Bildschirmpräsentation">
                        <svg width="9" height="9" viewBox="0 0 9 9" fill="none" stroke="currentColor"><path d="M0 .5h9M1.500 2.500h6M2 4.500h5M3.500 7.500h2" /></svg>
                    </ViewButton>
                    <button aria-label="Verkleinern"><svg width="7" height="7" viewBox="0 0 7 7" stroke="currentColor" strokeWidth="1.500"><path d="M0 3.500h7" /></svg></button>
                    <ZoomSlider type="range" aria-label="Zoom" min="0" max="100" defaultValue="41" />
                    <button aria-label="Vergrößern"><svg width="7" height="7" viewBox="0 0 7 7" stroke="currentColor" strokeWidth="1.500"><path d="M0 3.500h7M3.500 0v7" /></svg></button>
                    <ZoomValue>79 %</ZoomValue>
                    <button aria-label="An Fenster anpassen">
                        <svg width="10" height="11" viewBox="0 0 10 11" fill="none" stroke="currentColor"><path d="M.5 .5h9v10h-9zM5 1v3M5 7v3M1 5.500h3M6 5.500h3" strokeDasharray="2 1" /></svg>
                    </button>
                </StatusRight>
            </StatusBar>
            <Watermark>blog</Watermark>
            <ThemeColorsDialog />
            <ColorsDialog />
        </Window>
    )
}

export default App
